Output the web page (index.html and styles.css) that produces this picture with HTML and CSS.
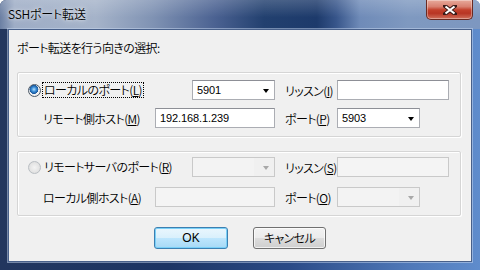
FILE: index.html
```html
<!DOCTYPE html>
<html lang="ja">
<head>
<meta charset="utf-8">
<title>SSHポート転送</title>
<link rel="stylesheet" href="styles.css">
</head>
<body>
<div class="window">
  <div class="titlebar">
    <span class="title">SSHポート転送</span>
    <div class="close">
      <svg width="14" height="10" viewBox="0 0 14 10">
        <path d="M2 1 L12 9 M12 1 L2 9" stroke="#3a1a18" stroke-width="4" stroke-linecap="square"/>
        <path d="M2.5 1.5 L11.5 8.5 M11.5 1.5 L2.5 8.5" stroke="#ffffff" stroke-width="2.2"/>
      </svg>
    </div>
  </div>
  <div class="frame-body">
    <div class="client">
      <div class="heading">ポート転送を行う向きの選択:</div>

      <div class="group">
        <div class="radio-label"><span class="radio checked"></span><span class="focus">ローカルのポート(<u>L</u>)</span></div>
        <div class="combo">5901<span class="arrow"></span></div>
        <div class="rlabel">リッスン(<u>I</u>)</div>
        <div class="input"></div>
        <div class="label">リモート側ホスト(<u>M</u>)</div>
        <div class="input host">192.168.1.239</div>
        <div class="rlabel">ポート(<u>P</u>)</div>
        <div class="combo">5903<span class="arrow"></span></div>
      </div>

      <div class="group group2">
        <div class="radio-label"><span class="radio"></span><span class="nofocus">リモートサーバのポート(<u>R</u>)</span></div>
        <div class="combo disabled"><span class="arrow"></span></div>
        <div class="rlabel">リッスン(<u>S</u>)</div>
        <div class="input disabled"></div>
        <div class="label">ローカル側ホスト(<u>A</u>)</div>
        <div class="input host disabled"></div>
        <div class="rlabel">ポート(<u>O</u>)</div>
        <div class="combo disabled"><span class="arrow"></span></div>
      </div>

      <div class="buttons">
        <div class="btn default">OK</div>
        <div class="btn cancel">キャンセル</div>
      </div>
    </div>
  </div>
</div>
</body>
</html>
```
FILE: styles.css
```css
html, body {
  margin: 0;
  padding: 0;
  width: 480px;
  height: 270px;
  overflow: hidden;
  background: #ffffff;
}
body {
  font-family: "Noto Sans CJK JP", "Noto Sans", sans-serif;
  font-size: 12px;
  font-weight: 350;
  letter-spacing: -0.6px;
  font-feature-settings: "palt";
  color: #000;
}
.window {
  width: 480px;
  height: 270px;
  display: flex;
  flex-direction: column;
  border-radius: 6px 6px 0 0;
  overflow: hidden;
  background: linear-gradient(90deg, #22365e 0%, #1d3564 35%, #2a4a86 60%, #4f78b8 85%, #5f8ccc 100%);
}
.titlebar {
  height: 29px;
  flex: none;
  display: flex;
  align-items: flex-start;
  justify-content: space-between;
  background:
    linear-gradient(180deg, rgba(255,255,255,0.18) 0%, rgba(255,255,255,0) 60%),
    linear-gradient(90deg, #6b7fa3 0%, #9eadc6 3%, #a5b3c9 20%, #7f92b3 32%, #4a6191 45%, #22406f 55%, #1d3a6b 66%, #37558a 70%, #6f8bb8 75%, #7f99c0 85%, #7d97c0 100%);
}
.title {
  padding: 6px 0 0 8px;
  line-height: 16px;
  font-size: 12px;
  letter-spacing: -0.2px;
  color: #000;
  text-shadow: 0 0 6px rgba(255,255,255,0.8), 0 0 3px rgba(255,255,255,0.6);
}
.close {
  width: 45px;
  height: 19px;
  margin-right: 7px;
  border: 1px solid #6a2a22;
  border-top: none;
  border-radius: 0 0 5px 5px;
  display: flex;
  align-items: center;
  justify-content: center;
  background: linear-gradient(180deg, #e8aa9c 0%, #d88070 35%, #c3402c 52%, #b83524 70%, #d0705c 100%);
  box-shadow: inset 0 0 0 1px rgba(255,255,255,0.35);
}
.frame-body {
  flex: 1;
  padding: 0 8px 8px 8px;
  display: flex;
}
.client {
  flex: 1;
  background: #f0f0f0;
  border: 1px solid #48608a;
  box-shadow: 0 0 0 1px rgba(200,215,240,0.5);
  display: flex;
  flex-direction: column;
}
.heading {
  padding: 10px 0 0 8px;
  line-height: 16px;
}
.group {
  margin: 16px 10px 0 8px;
  border: 1px solid #d5d5d5;
  border-radius: 2px;
  box-shadow: inset 1px 1px 0 #ffffff, 1px 1px 0 #ffffff;
  padding: 7px 11px 8px 10px;
  display: grid;
  grid-template-columns: 127px 37px 83px 62px 112px;
  grid-template-rows: 20px 20px;
  row-gap: 8px;
  align-items: center;
}
.group2 {
  margin-top: 14px;
  padding-top: 5px;
  padding-bottom: 8px;
  row-gap: 10px;
}
.radio-label {
  grid-column: 1 / 3;
  display: flex;
  align-items: center;
}
.label {
  grid-column: 1 / 2;
  padding-left: 15px;
  white-space: nowrap;
}
.rlabel {
  grid-column: 4 / 5;
  padding-left: 10px;
  white-space: nowrap;
}
.focus, .nofocus {
  padding: 0 1px;
  line-height: 14px;
  outline: 1px dotted #000;
  outline-offset: 0;
  white-space: nowrap;
}
.nofocus { outline: none; }
u { text-underline-offset: 1px; }
.radio {
  width: 11px;
  height: 11px;
  border-radius: 50%;
  border: 1px solid #8f9aa5;
  margin-right: 2px;
  background: radial-gradient(circle at 40% 40%, #ffffff 0%, #e2e3e4 70%, #cfd0d1 100%);
  box-sizing: content-box;
  position: relative;
}
.radio.checked {
  background:
    radial-gradient(circle at 45% 40%, #b4e0ff 0%, #3d8fd6 25%, #16549b 48%, rgba(255,255,255,0) 52%),
    radial-gradient(circle, #ffffff 0%, #f0f0f0 60%, #d8d8d8 100%);
  border-color: #4d5a68;
}
.group2 .radio {
  border-color: #b9bec3;
  background: radial-gradient(circle, #f4f4f4 0%, #e4e4e4 60%, #d5d5d5 100%);
}
.combo, .input {
  box-sizing: border-box;
  height: 20px;
  border: 1px solid #abadb3;
  border-top-color: #8d8f96;
  background: #fff;
  font-family: "Liberation Sans", Arial, sans-serif;
  font-size: 11px;
  font-weight: 400;
  letter-spacing: -0.1px;
  line-height: 18px;
  padding-left: 4px;
  position: relative;
}
.combo {
  width: 83px;
  justify-self: start;
}
.group .combo:nth-child(2) { grid-column: 3 / 4; }
.input { grid-column: 5 / 6; }
.input.host {
  grid-column: 2 / 4;
}
.group .combo:last-child { grid-column: 5 / 6; }
.arrow {
  position: absolute;
  right: 5px;
  top: 8px;
  width: 0;
  height: 0;
  border-left: 3.5px solid transparent;
  border-right: 3.5px solid transparent;
  border-top: 4px solid #000;
}
.disabled {
  background: #f4f4f4;
  border-color: #c9c9c9;
}
.combo.disabled {
  background: linear-gradient(90deg, #f3f3f3 0%, #f3f3f3 75%, #f0f0f0 75%);
}
.combo.disabled .arrow {
  border-top-color: #a8a8a8;
}
.buttons {
  margin-top: 11px;
  display: flex;
  justify-content: center;
  gap: 25px;
}
.btn {
  box-sizing: border-box;
  width: 74px;
  height: 22px;
  border: 1px solid #707070;
  border-radius: 3px;
  text-align: center;
  line-height: 20px;
  background: linear-gradient(180deg, #f2f2f2 0%, #ebebeb 50%, #dddddd 50%, #cfcfcf 100%);
  box-shadow: inset 0 0 0 1px rgba(255,255,255,0.7);
}
.btn.cancel { width: 73px; }
.btn.default {
  border-color: #3c7fb1;
  background: linear-gradient(180deg, #eaf6fd 0%, #d9f0fc 50%, #bee6fd 50%, #a7d9f5 100%);
  box-shadow: inset 0 0 0 1px #7ad0f7;
  font-family: "Liberation Sans", Arial, sans-serif;
  font-weight: 400;
  letter-spacing: 0;
}
```
